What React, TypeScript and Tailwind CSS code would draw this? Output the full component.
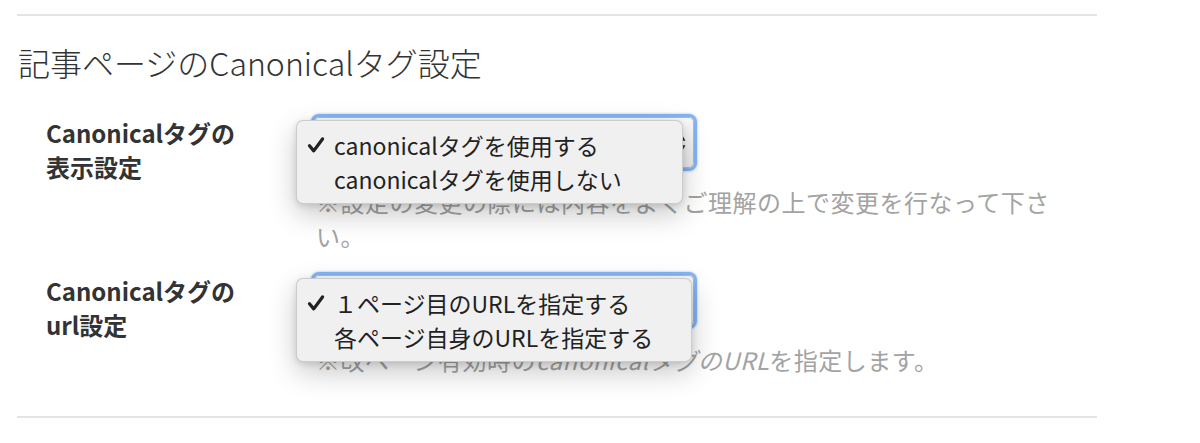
import type { ReactNode } from "react";

type Option = { label: string; checked?: boolean };

function CheckIcon() {
  return (
    <svg viewBox="0 0 16 16" className="size-[18px]" aria-hidden="true">
      <path
        d="M2.2 8.6 L6 13.2 L13.8 2.6"
        fill="none"
        stroke="#222"
        strokeWidth="2.9"
        strokeLinecap="round"
        strokeLinejoin="round"
      />
    </svg>
  );
}

function SelectArrows() {
  return (
    <svg viewBox="0 0 10 22" className="h-[24px] w-[11px]" aria-hidden="true">
      <path d="M5 1 L9.5 9 L0.5 9 Z" fill="#222" />
      <path d="M5 21 L9.5 13 L0.5 13 Z" fill="#222" />
    </svg>
  );
}

function OpenSelect({ options }: { options: Option[] }) {
  return (
    <div className="relative h-[51px] w-[380px] rounded-[5px] border border-[#b9b9b9] bg-gradient-to-b from-[#fafafa] to-[#ebebeb] shadow-[0_0_0_3px_#86b3f2,0_0_2px_4px_rgba(120,170,240,0.35)]">
      <div className="absolute right-[7px] top-1/2 -translate-y-1/2">
        <SelectArrows />
      </div>
      <ul className="absolute left-[-19px] top-[2px] z-10 min-w-[387px] rounded-[7px] border border-black/15 bg-[#f0f0f0] py-[7px] pr-[38px] shadow-[0_10px_28px_rgba(0,0,0,0.22),0_2px_6px_rgba(0,0,0,0.12)]">
        {options.map(({ label, checked }) => (
          <li
            key={label}
            className="flex h-[34px] items-center whitespace-nowrap text-[23px] text-[#222]"
          >
            <span className="flex w-[37px] justify-center pl-[1px]">
              {checked && <CheckIcon />}
            </span>
            {label}
          </li>
        ))}
      </ul>
    </div>
  );
}

function SettingRow({
  title,
  options,
  help,
}: {
  title: ReactNode;
  options: Option[];
  help: ReactNode;
}) {
  return (
    <div className="flex">
      <div className="w-[297px] pl-[29px] text-[24px] font-bold leading-[34px] text-[#333]">
        {title}
      </div>
      <div className="pt-[1px]">
        <OpenSelect options={options} />
        <p className="mt-[17px] w-[748px] pl-[2px] text-[24px] leading-[34px] tracking-[0.5px] text-[#a3a3a3]">
          {help}
        </p>
      </div>
    </div>
  );
}

export default function App() {
  return (
    <div className="h-[443px] w-[1200px] bg-white pt-[14px] font-['Noto_Sans_CJK_JP',sans-serif]">
      <section className="ml-[17px] w-[1080px] border-y-2 border-[#e4e4e4] pb-[39px]">
        <h2 className="mt-[26px] pl-px text-[32px] font-light leading-[40px] text-[#333]">
          記事ページのCanonicalタグ設定
        </h2>
        <div className="mt-[34px] flex flex-col gap-[21px]">
          <SettingRow
            title={
              <>
                Canonicalタグの
                <br />
                表示設定
              </>
            }
            options={[
              { label: "canonicalタグを使用する", checked: true },
              { label: "canonicalタグを使用しない" },
            ]}
            help="※設定の変更の際には内容をよくご理解の上で変更を行なって下さい。"
          />
          <SettingRow
            title={
              <>
                Canonicalタグの
                <br />
                url設定
              </>
            }
            options={[
              { label: "１ページ目のURLを指定する", checked: true },
              { label: "各ページ自身のURLを指定する" },
            ]}
            help={
              <>
                ※改ページ有効時の<i>canonicalタグのURL</i>を指定します。
              </>
            }
          />
        </div>
      </section>
    </div>
  );
}
